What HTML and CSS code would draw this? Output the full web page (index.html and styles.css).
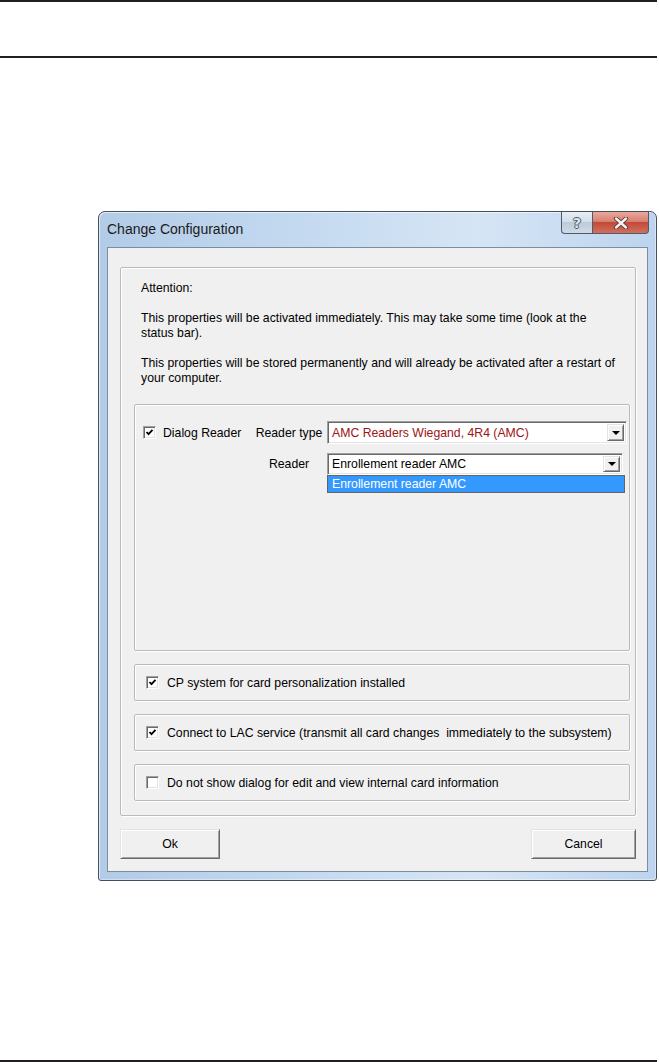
FILE: index.html
```html
<!DOCTYPE html>
<html lang="en">
<head>
    <meta charset="UTF-8">
    <meta name="viewport" content="width=device-width, initial-scale=1.0">
    <title>Change Configuration</title>
    <link rel="stylesheet" href="styles.css">
</head>
<body>
    <div class="page">
        <div class="rule"></div>
        <div class="rule rule-second"></div>

        <div class="window">
            <div class="titlebar">
                <span class="title">Change Configuration</span>
                <div class="caption-buttons">
                    <div class="cap-btn cap-help">?</div>
                    <div class="cap-btn cap-close">
                        <svg width="16" height="12" viewBox="0 0 16 12">
                            <path d="M3 1.5 L13 10.5 M13 1.5 L3 10.5" stroke="#5a3030" stroke-width="4.2" stroke-linecap="round"/>
                            <path d="M3 1.5 L13 10.5 M13 1.5 L3 10.5" stroke="#f4f4f4" stroke-width="2.4" stroke-linecap="round"/>
                        </svg>
                    </div>
                </div>
            </div>

            <div class="client">
                <div class="group main-group">
                    <div class="notes">
                        <p>Attention:</p>
                        <p>This properties will be activated immediately. This may take some time (look at the<br>status bar).</p>
                        <p>This properties will be stored permanently and will already be activated after a restart of<br>your computer.</p>
                    </div>

                    <div class="group reader-group">
                        <div class="reader-grid">
                            <label class="check-label">
                                <span class="checkbox checked"></span>
                                Dialog Reader
                            </label>
                            <span class="field-label">Reader type</span>
                            <div class="combo combo-type">
                                <span class="combo-text red">AMC Readers Wiegand, 4R4 (AMC)</span>
                                <span class="combo-btn"></span>
                            </div>

                            <span></span>
                            <span class="field-label">Reader</span>
                            <div class="combo combo-reader">
                                <span class="combo-text">Enrollement reader AMC</span>
                                <span class="combo-btn"></span>
                                <div class="combo-list">
                                    <div class="combo-item selected">Enrollement reader AMC</div>
                                </div>
                            </div>
                        </div>
                    </div>

                    <div class="group option">
                        <span class="checkbox checked"></span>
                        <span>CP system for card personalization installed</span>
                    </div>
                    <div class="group option">
                        <span class="checkbox checked"></span>
                        <span>Connect to LAC service (transmit all card changes &nbsp;immediately to the subsystem)</span>
                    </div>
                    <div class="group option">
                        <span class="checkbox"></span>
                        <span>Do not show dialog for edit and view internal card information</span>
                    </div>
                </div>

                <div class="buttons">
                    <button class="btn btn-ok">Ok</button>
                    <button class="btn btn-cancel">Cancel</button>
                </div>
            </div>
        </div>

        <div class="rule rule-bottom"></div>
    </div>
</body>
</html>
```

FILE: styles.css
```css
body {
    margin: 0;
    font-family: "Liberation Sans", Arial, sans-serif;
    font-size: 12.25px;
    color: #000;
    background: #fff;
}
.page {
    height: 1062px;
    display: flex;
    flex-direction: column;
}
.rule {
    width: 657px;
    height: 2px;
    background: #231f20;
    flex-shrink: 0;
}
.rule-second {
    margin-top: 54px;
}
.rule-bottom {
    margin-top: auto;
}

/* window frame (Aero style) */
.window {
    margin: 153px 0 0 98px;
    width: 559px;
    height: 670px;
    box-sizing: border-box;
    border: 1px solid #44505e;
    border-radius: 7px 7px 3px 3px;
    padding: 0 8px 8px;
    background: linear-gradient(to right, #b2cbe7 0%, #c3d9f0 35%, #d6e5f5 68%, #bcd4ee 100%);
    box-shadow: inset 1px 1px 0 rgba(255,255,255,0.6), inset -1px -1px 0 rgba(255,255,255,0.4);
}
.titlebar {
    height: 35px;
    display: flex;
    justify-content: space-between;
    align-items: flex-start;
}
.title {
    line-height: 35px;
    font-size: 14px;
    color: #1a1a1a;
}
.caption-buttons {
    display: flex;
    margin-right: -1px;
}
.cap-btn {
    height: 21px;
    border: 1px solid #4d5b6c;
    border-top: none;
    display: flex;
    align-items: center;
    justify-content: center;
}
.cap-help {
    width: 30px;
    border-right: none;
    border-radius: 0 0 0 4px;
    background: linear-gradient(to bottom, #e6edf5 0%, #d3dfec 45%, #bccbdc 50%, #cfdae7 100%);
    font-family: "DejaVu Sans", sans-serif;
    font-size: 14px;
    font-weight: bold;
    color: #dfe4ea;
    text-shadow: 1px 0 0 #505a66, -1px 0 0 #505a66, 0 1px 0 #505a66, 0 -1px 0 #505a66;
}
.cap-close {
    width: 55px;
    border-radius: 0 0 4px 0;
    background: linear-gradient(to bottom, #e9a89c 0%, #d88071 45%, #c24a38 50%, #d0705c 100%);
}

/* client area */
.client {
    height: 625px;
    box-sizing: border-box;
    border: 1px solid #7c8da0;
    background: #f0f0f0;
    padding: 19px 11px 12px 12px;
}
.group {
    box-sizing: border-box;
    border: 1px solid #bababa;
    border-radius: 2px;
    box-shadow: inset 1px 1px 0 #fff, 1px 1px 0 #fff;
}
.main-group {
    height: 549px;
    padding: 13px 5px 14px 13px;
}
.notes {
    padding-left: 7px;
}
.notes p {
    margin: 0;
    line-height: 15px;
}
.notes p + p {
    margin-top: 15px;
}
.reader-group {
    height: 247px;
    margin-top: 18px;
    padding: 16px 0 0 8px;
}
.reader-grid {
    display: grid;
    grid-template-columns: 108px 70px auto;
    column-gap: 3px;
    row-gap: 9px;
    align-items: center;
}
.check-label {
    display: flex;
    align-items: center;
    gap: 7px;
}
.field-label {
    text-align: center;
    white-space: nowrap;
}

/* checkbox */
.checkbox {
    width: 13px;
    height: 13px;
    box-sizing: border-box;
    background: #fff;
    border: 1px solid;
    border-color: #a0a0a0 #fff #fff #a0a0a0;
    box-shadow: inset 1px 1px 0 #696969, inset -1px -1px 0 #e3e3e3;
    flex-shrink: 0;
}
.checkbox.checked {
    background: #fff url("data:image/svg+xml,%3Csvg xmlns='http://www.w3.org/2000/svg' width='11' height='11' viewBox='0 0 11 11'%3E%3Cpath d='M2.5 5 L4.5 7.2 L8.5 2.8' fill='none' stroke='%23000' stroke-width='1.8'/%3E%3C/svg%3E") center / 11px 11px no-repeat;
}

/* combo boxes */
.combo {
    position: relative;
    box-sizing: border-box;
    background: #fff;
    border: 1px solid;
    border-color: #a0a0a0 #fff #fff #a0a0a0;
    box-shadow: inset 1px 1px 0 #696969, inset -1px -1px 0 #e3e3e3;
    display: flex;
    align-items: center;
    padding: 0 2px 0 4px;
}
.combo-type {
    width: 300px;
    height: 23px;
}
.combo-reader {
    width: 296px;
    height: 22px;
}
.combo-text {
    flex-grow: 1;
    white-space: nowrap;
}
.combo-text.red {
    color: #9c1414;
}
.combo-btn {
    width: 17px;
    height: calc(100% - 4px);
    box-sizing: border-box;
    background: #f0f0f0;
    border: 1px solid;
    border-color: #e3e3e3 #696969 #696969 #e3e3e3;
    box-shadow: inset 1px 1px 0 #fff, inset -1px -1px 0 #a0a0a0;
    display: flex;
    align-items: center;
    justify-content: center;
}
.combo-btn::after {
    content: "";
    border-left: 4px solid transparent;
    border-right: 4px solid transparent;
    border-top: 4px solid #000;
}
.combo-list {
    position: absolute;
    left: -1px;
    top: calc(100% + 1px);
    width: 298px;
    box-sizing: border-box;
    border: 1px solid #646464;
    background: #fff;
}
.combo-item {
    height: 16px;
    line-height: 16px;
    padding-left: 4px;
}
.combo-item.selected {
    background: #3399ff;
    color: #fff;
}

/* single option boxes */
.option {
    height: 37px;
    margin-top: 13px;
    display: flex;
    align-items: center;
    gap: 8px;
    padding-left: 11px;
}

/* bottom buttons */
.buttons {
    margin-top: 13px;
    display: flex;
    justify-content: space-between;
}
.btn {
    height: 30px;
    font-family: "Liberation Sans", Arial, sans-serif;
    font-size: 12.25px;
    color: #000;
    background: #f0f0f0;
    border: 1px solid;
    border-color: #e3e3e3 #696969 #696969 #e3e3e3;
    box-shadow: inset 1px 1px 0 #fff, inset -1px -1px 0 #a0a0a0;
    padding: 0;
}
.btn-ok {
    width: 100px;
}
.btn-cancel {
    width: 105px;
}
```
